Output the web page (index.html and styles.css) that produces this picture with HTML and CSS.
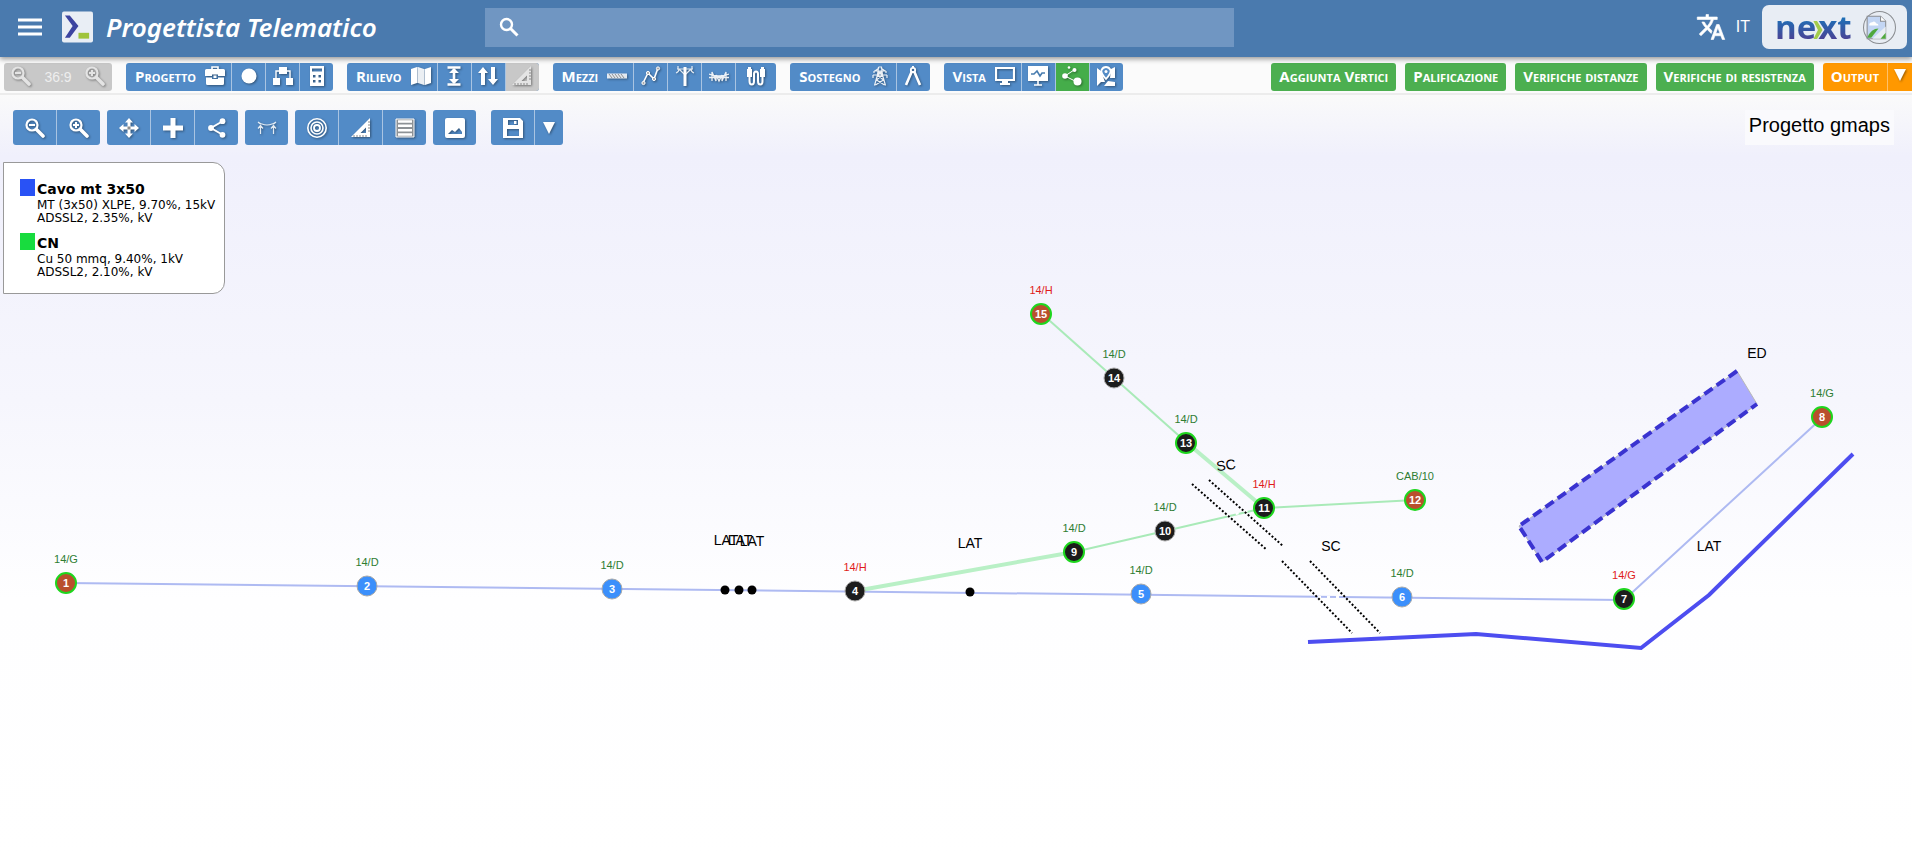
FILE: index.html
```html
<!DOCTYPE html>
<html lang="it">
<head>
  <meta charset="UTF-8" />
  <meta name="viewport" content="width=device-width, initial-scale=1.0"/>
  <title>Progettista Telematico</title>
  <link rel="stylesheet" href="styles.css">
</head>
<body>

  <!-- Icon set -->
  <svg class="sprite" aria-hidden="true">
    <symbol id="i-zoom-out" viewBox="0 0 20 20"><circle cx="7" cy="7" r="5.5" fill="none" stroke="currentColor" stroke-width="2.2"/><path d="M4 7h6" stroke="currentColor" stroke-width="2"/><path d="M11.5 11.5L18 18" stroke="currentColor" stroke-width="3.6" stroke-linecap="round"/></symbol>
    <symbol id="i-zoom-in" viewBox="0 0 20 20"><circle cx="7" cy="7" r="5.5" fill="none" stroke="currentColor" stroke-width="2.2"/><path d="M4 7h6M7 4v6" stroke="currentColor" stroke-width="2"/><path d="M11.5 11.5L18 18" stroke="currentColor" stroke-width="3.6" stroke-linecap="round"/></symbol>
    <symbol id="i-case" viewBox="0 0 20 20"><path d="M7 3V1h6v2" fill="none" stroke="currentColor" stroke-width="1.6"/><path d="M1.500 3h17q1.500 0 1.500 1.500V10h-7V8.500H7V10H0V4.500Q0 3 1.500 3zM1 11.500h6V13h6v-1.500h6V17.500q0 1.500-1.500 1.500h-15Q1 19 1 17.500z" fill="currentColor"/><path d="M8.500 9.500h3v2.500h-3z" fill="currentColor"/></symbol>
    <symbol id="i-dot" viewBox="0 0 20 20"><circle cx="10" cy="10" r="7.500" fill="currentColor"/></symbol>
    <symbol id="i-tree" viewBox="0 0 20 20"><path d="M6 1h8v7H6zM0 12h7v7H0zM13 12h7v7h-7z" fill="currentColor"/><path d="M7 5H3v7M13 5h4v7" fill="none" stroke="currentColor" stroke-width="1.400"/></symbol>
    <symbol id="i-calc" viewBox="0 0 20 20"><path d="M3 0h14v20H3zM5 2.500v3h10v-3zM6 9v2.500h2.500V9zM11.500 9v2.500H14V9zM6 14v2.500h2.500V14zM11.500 14v2.500H14V14z" fill="currentColor" fill-rule="evenodd"/></symbol>
    <symbol id="i-map" viewBox="0 0 20 20"><path d="M0 3l6-2v16l-6 2z" fill="currentColor"/><path d="M7 1l6 2v16l-6-2z" fill="currentColor" opacity=".9"/><path d="M14 3l6-2v16l-6 2z" fill="currentColor"/><path d="M6 1h1v16H6zM13 3h1v16h-1z" fill="currentColor" opacity=".6"/></symbol>
    <symbol id="i-height" viewBox="0 0 20 20"><path d="M3.500 1.500h13M3.500 18.500h13M10 3v14" stroke="currentColor" stroke-width="2.600"/><path d="M10 2l5 5H5zM10 18l5-5H5z" fill="currentColor"/></symbol>
    <symbol id="i-updown" viewBox="0 0 20 20"><path d="M5 1l5 6H7v12H3V7H0zM15 19l-5-6h3V1h4v12h3z" fill="currentColor"/></symbol>
    <symbol id="i-square" viewBox="0 0 20 20"><path d="M19 0v19H0zM15 9.500L9.500 15H15z" fill="currentColor" fill-rule="evenodd"/><path d="M3 19v-2M6 19v-2M9 19v-2M12 19v-2M15 19v-2M19 4h-2M19 7h-2M19 10h-2M19 13h-2" stroke="#888" stroke-width="1"/></symbol>
    <symbol id="i-cable" viewBox="0 0 20 20"><path d="M0 7.500h20v5H0z" fill="currentColor" opacity=".85"/><path d="M2 8l3 4M5 8l3 4M8 8l3 4M11 8l3 4M14 8l3 4" stroke="#777" stroke-width=".8"/></symbol>
    <symbol id="i-route" viewBox="0 0 20 20"><path d="M2 17L7 7l6 6 4-11" fill="none" stroke="currentColor" stroke-width="1.600"/><g fill="#aaa" stroke="currentColor"><circle cx="2.500" cy="17" r="1.600"/><circle cx="7" cy="7" r="1.600"/><circle cx="13" cy="13" r="1.600"/><circle cx="17" cy="2.500" r="1.600"/></g></symbol>
    <symbol id="i-pole" viewBox="0 0 20 20"><path d="M10 1v19" stroke="currentColor" stroke-width="3"/><path d="M2 3h16M4 3l6 6 6-6M1 7q3-1 3-4M19 7q-3-1-3-4M3 0v3M17 0v3" fill="none" stroke="currentColor" stroke-width="1.200" opacity=".85"/></symbol>
    <symbol id="i-span" viewBox="0 0 20 20"><path d="M0 8q10 4 20 0M0 11.500h20M3 15V6l4 9V9l3 6 3-6v6l4-9v9" fill="none" stroke="currentColor" stroke-width="1.300" opacity=".9"/></symbol>
    <symbol id="i-plug" viewBox="0 0 20 20"><path d="M3.500 6v9q0 3.500 2.300 3.500T8 15V8q0-2.500 2-2.500T12 8v7q0 3.500 2.300 3.500T16.500 15V6" fill="none" stroke="currentColor" stroke-width="2"/><path d="M2 1h3v2h1v8H1V3h1zM15 1h3v2h1v8h-5V3h1z" fill="currentColor"/></symbol>
    <symbol id="i-tower" viewBox="0 0 20 20"><path d="M8.500 1h3l1 8 3 10.500M8.500 1l-1 8-3 10.500M4 5h12M3 9h14M8 5l4.500 4-6 5 8 5M12 5L7.500 9l6 5-8 5M4 5v2M16 5v2M3 9v3M17 9v3M5 5l4-3M15 5l-4-3" fill="none" stroke="currentColor" stroke-width="1.200" opacity=".9"/></symbol>
    <symbol id="i-compass" viewBox="0 0 20 20"><path d="M9 5L3 19M11 5l6 14" stroke="currentColor" stroke-width="2.600"/><circle cx="10" cy="4" r="2.200" fill="none" stroke="currentColor" stroke-width="1.800"/><path d="M10 0v2" stroke="currentColor" stroke-width="2"/></symbol>
    <symbol id="i-screen" viewBox="0 0 20 20"><path d="M1 2h18v12H1z" fill="none" stroke="currentColor" stroke-width="2.200"/><path d="M7 15h6v2h2v2H5v-2h2z" fill="currentColor"/></symbol>
    <symbol id="i-board" viewBox="0 0 20 20"><path d="M0 0h20v15H0z" fill="currentColor"/><path d="M3 8h3l3-3 3 5 2-3h3" fill="none" stroke="#487caf" stroke-width="1.600"/><path d="M10 15v4M6 19h8" stroke="currentColor" stroke-width="1.600"/></symbol>
    <symbol id="i-nodes" viewBox="0 0 20 20"><path d="M3 10l9-6M3 10l12 6" stroke="currentColor" stroke-width="1"/><circle cx="3" cy="10" r="2.800" fill="currentColor"/><circle cx="15.500" cy="15.500" r="4" fill="currentColor"/><circle cx="12.500" cy="4" r="2" fill="currentColor"/><circle cx="7" cy="1.500" r="1.300" fill="currentColor"/></symbol>
    <symbol id="i-mappin" viewBox="0 0 20 20"><path d="M1 2l4 3 4 11-4 0-4 4zM15 3l4-2v11l-5 0zM12 15l7 1v4H8z" fill="currentColor"/><path d="M10 13Q4.500 7 5.500 4 7 1 10 1t4.500 3Q15.500 7 10 13z" fill="#548cc6" stroke="currentColor" stroke-width="1.800"/><circle cx="10" cy="5.500" r="1.500" fill="currentColor"/></symbol>
    <symbol id="i-move" viewBox="0 0 20 20"><path d="M10 0l4 4.500h-2.500v4h4V6L20 10l-4.500 4v-2.500h-4v4H14L10 20l-4-4.500h2.500v-4h-4V14L0 10l4.500-4v2.500h4v-4H6z" fill="currentColor"/><path d="M8.500 8.500h3v3h-3z" fill="#8d8d8d"/></symbol>
    <symbol id="i-plus" viewBox="0 0 20 20"><path d="M7.500 0h5v7.500H20v5h-7.500V20h-5v-7.500H0v-5h7.500z" fill="currentColor"/></symbol>
    <symbol id="i-share" viewBox="0 0 20 20"><path d="M16 3L4 10l12 7" fill="none" stroke="currentColor" stroke-width="2"/><circle cx="15.500" cy="3.200" r="2.900" fill="currentColor"/><circle cx="4" cy="10" r="2.900" fill="currentColor"/><circle cx="15.500" cy="16.800" r="2.900" fill="currentColor"/></symbol>
    <symbol id="i-sag" viewBox="0 0 20 20"><path d="M1 4q2 2 4 2 5 2 10 0 2 0 4-2M3.500 16V8M1 10.500l2.500-3 2.500 3M16.500 16V8M14 10.500l2.500-3 2.500 3" fill="none" stroke="currentColor" stroke-width="1.200" opacity=".85"/></symbol>
    <symbol id="i-target" viewBox="0 0 20 20"><g fill="none" stroke="currentColor"><circle cx="10" cy="10" r="9.200" stroke-width="1.600"/><circle cx="10" cy="10" r="6" stroke-width="1.600"/><circle cx="10" cy="10" r="3" stroke-width="1.800"/></g></symbol>
    <symbol id="i-list" viewBox="0 0 20 20"><path d="M1 1h18v18H1z" fill="#8d9296" stroke="currentColor"/><path d="M3 3.500h14M3 7.800h14M3 12.200h14M3 16.500h14" stroke="currentColor" stroke-width="2.400"/></symbol>
    <symbol id="i-image" viewBox="0 0 20 20"><path d="M2 0h16q2 0 2 2v16q0 2-2 2H2q-2 0-2-2V2Q0 0 2 0zM3 16h14v-2l-3-4-4 4-3-2z" fill="currentColor" fill-rule="evenodd"/></symbol>
    <symbol id="i-save" viewBox="0 0 20 20"><path d="M0 0h17l3 3v17H0zM5 2v5h10V2zM4 11v7h12v-7z" fill="currentColor" fill-rule="evenodd"/><path d="M11 3h2.500v3H11z" fill="currentColor"/></symbol>
    <symbol id="i-down" viewBox="0 0 20 20"><path d="M4 4h12l-6 12z" fill="currentColor"/></symbol>
  </svg>

  <header class="topbar">
    <div class="brand">
      <button class="menu-icon" aria-label="Menu"><svg viewBox="0 0 24 18"><path d="M0 2h24M0 9h24M0 16h24" stroke="currentColor" stroke-width="3"/></svg></button>
      <svg class="logo" viewBox="0 0 32 32"><rect width="32" height="32" rx="2" fill="#e9eef5"/><path d="M3 4h5l9 11-9 12H3l8-12z" fill="#3c44a0"/><path d="M17 22h11v6H17z" fill="#9fc43c"/></svg>
      <h1>Progettista Telematico</h1>
    </div>
    <label class="search">
      <svg viewBox="0 0 20 20"><circle cx="7.500" cy="7.500" r="5.500" fill="none" stroke="currentColor" stroke-width="2.400"/><path d="M11.500 11.500l7 7" stroke="currentColor" stroke-width="3"/></svg>
      <input type="search" aria-label="Cerca">
    </label>
    <div class="account">
      <button class="lang"><svg viewBox="0 0 24 24"><path fill="currentColor" stroke="currentColor" stroke-width=".5" d="M12.870 15.070l-2.540-2.510.03-.03A17.520 17.520 0 0 0 14.070 6H17V4h-7V2H8v2H1v2h11.170C11.500 7.920 10.440 9.750 9 11.350 8.070 10.320 7.300 9.190 6.690 8h-2c.73 1.630 1.730 3.170 2.980 4.560l-5.090 5.020L4 19l5-5 3.110 3.110.76-2.040zM18.500 10h-2L12 22h2l1.120-3h4.750L21 22h2l-4.500-12zm-2.620 7l1.620-4.330L19.120 17h-3.240z"/></svg>IT</button>
      <button class="profile" aria-label="Profilo">
        <span class="next">ne<svg viewBox="0 0 11 22"><path d="M1 1h4l6 10-6 10H1l5-10z" fill="#a3cb4b"/></svg>xt</span>
        <svg class="avatar" viewBox="0 0 32 32"><circle cx="16" cy="16" r="15.500" fill="none" stroke="#8a8d91"/><path d="M4 5h13l5 5v17H4z" fill="#c3d6f4" stroke="#8a8d91"/><path d="M17 5v5h5" fill="#fff" stroke="#8a8d91"/><path d="M6 14q0-3 3-3 2-2 4 1 2 0 2 2z" fill="#fff"/><path d="M4 26q4-9 11-9l-7 9z" fill="#4fa83d"/><path d="M9 27l13-12v12z" fill="#e8edf4"/><path d="M17 27l5-6v6z" fill="#4fa83d"/></svg>
      </button>
    </div>
  </header>

  <nav class="toolbar">
    <div class="group zoom disabled">
      <button disabled aria-label="Riduci"><svg><use href="#i-zoom-out"/></svg></button>
      <span>36:9</span>
      <button disabled aria-label="Ingrandisci"><svg><use href="#i-zoom-in"/></svg></button>
    </div>
    <div class="group">
      <button class="label">Progetto <svg><use href="#i-case"/></svg></button>
      <button aria-label="Punto"><svg><use href="#i-dot"/></svg></button>
      <button aria-label="Struttura"><svg><use href="#i-tree"/></svg></button>
      <button aria-label="Calcolo"><svg><use href="#i-calc"/></svg></button>
    </div>
    <div class="group">
      <button class="label">Rilievo <svg><use href="#i-map"/></svg></button>
      <button aria-label="Altezza"><svg><use href="#i-height"/></svg></button>
      <button aria-label="Inverti"><svg><use href="#i-updown"/></svg></button>
      <button class="disabled" disabled aria-label="Squadra"><svg><use href="#i-square"/></svg></button>
    </div>
    <div class="group">
      <button class="label">Mezzi <svg><use href="#i-cable"/></svg></button>
      <button aria-label="Tracciato"><svg><use href="#i-route"/></svg></button>
      <button aria-label="Palo"><svg><use href="#i-pole"/></svg></button>
      <button aria-label="Campata"><svg><use href="#i-span"/></svg></button>
      <button class="wide" aria-label="Cavi"><svg><use href="#i-plug"/></svg></button>
    </div>
    <div class="group">
      <button class="label">Sostegno <svg><use href="#i-tower"/></svg></button>
      <button aria-label="Compasso"><svg><use href="#i-compass"/></svg></button>
    </div>
    <div class="group">
      <button class="label">Vista <svg><use href="#i-screen"/></svg></button>
      <button aria-label="Profilo"><svg><use href="#i-board"/></svg></button>
      <button class="active" aria-label="Grafo"><svg><use href="#i-nodes"/></svg></button>
      <button aria-label="Mappa"><svg><use href="#i-mappin"/></svg></button>
    </div>
    <div class="steps">
      <button>Aggiunta Vertici</button>
      <button>Palificazione</button>
      <button>Verifiche distanze</button>
      <button>Verifiche di resistenza</button>
      <div class="output">
        <button>Output</button>
        <button class="arrow" aria-label="Altri output"><svg><use href="#i-down"/></svg></button>
      </div>
    </div>
  </nav>

  <main class="canvas">
    <svg class="plan" viewBox="0 96 1912 764">
      <!-- MT line -->
      <g class="line-mt">
        <path d="M66 584L1624 601L1822 419"/>
      </g>
      <!-- CN line -->
      <g class="line-cn">
        <path class="thick" d="M855 592L1074 553"/>
        <path d="M1074 553L1165 532L1264 509L1415 501"/>
        <path class="thick" d="M1264 509L1186 443"/>
        <path d="M1186 443L1041 314"/>
      </g>
      <path class="gap" d="M1227 517l21-5M1318 598h24"/>
      <g class="road">
        <path d="M1192 485l75 66M1209 481l74 66M1282 562l70 72M1310 562l70 72"/>
      </g>

      <path class="area" d="M1737 372L1519 527L1542 563L1757 405z"/>
      <path class="area-edge" d="M1737 372L1519 527L1542 563L1757 405"/>
      <path class="river" d="M1308 643L1476 635L1641 649L1709 596L1853 455"/>

      <g class="points">
        <circle cx="725" cy="591" r="4.500"/><circle cx="739" cy="591" r="4.500"/><circle cx="752" cy="591" r="4.500"/><circle cx="970" cy="593" r="4.500"/>
      </g>

      <g class="notes">
        <text x="726" y="546">LAT</text><text x="740" y="546">LAT</text><text x="752" y="547">LAT</text>
        <text x="970" y="549">LAT</text>
        <text x="1709" y="552">LAT</text>
        <text x="1757" y="359">ED</text>
        <text x="1331" y="552">SC</text>
        <text x="1226" y="471" transform="rotate(-8 1226 466)">SC</text>
      </g>

      <g class="node end"><circle cx="66" cy="584" r="10"/><text x="66" y="588">1</text><text class="tag" x="66" y="564">14/G</text></g>
      <g class="node mid"><circle cx="367" cy="587" r="10"/><text x="367" y="591">2</text><text class="tag" x="367" y="567">14/D</text></g>
      <g class="node mid"><circle cx="612" cy="590" r="10"/><text x="612" y="594">3</text><text class="tag" x="612" y="570">14/D</text></g>
      <g class="node"><circle cx="855" cy="592" r="10"/><text x="855" y="596">4</text><text class="tag bad" x="855" y="572">14/H</text></g>
      <g class="node mid"><circle cx="1141" cy="595" r="10"/><text x="1141" y="599">5</text><text class="tag" x="1141" y="575">14/D</text></g>
      <g class="node mid"><circle cx="1402" cy="598" r="10"/><text x="1402" y="602">6</text><text class="tag" x="1402" y="578">14/D</text></g>
      <g class="node joint"><circle cx="1624" cy="600" r="10"/><text x="1624" y="604">7</text><text class="tag bad" x="1624" y="580">14/G</text></g>
      <g class="node end"><circle cx="1822" cy="418" r="10"/><text x="1822" y="422">8</text><text class="tag" x="1822" y="398">14/G</text></g>
      <g class="node joint"><circle cx="1074" cy="553" r="10"/><text x="1074" y="557">9</text><text class="tag" x="1074" y="533">14/D</text></g>
      <g class="node"><circle cx="1165" cy="532" r="10"/><text x="1165" y="536">10</text><text class="tag" x="1165" y="512">14/D</text></g>
      <g class="node joint"><circle cx="1264" cy="509" r="10"/><text x="1264" y="513">11</text><text class="tag bad" x="1264" y="489">14/H</text></g>
      <g class="node end"><circle cx="1415" cy="501" r="10"/><text x="1415" y="505">12</text><text class="tag" x="1415" y="481">CAB/10</text></g>
      <g class="node joint"><circle cx="1186" cy="444" r="10"/><text x="1186" y="448">13</text><text class="tag" x="1186" y="424">14/D</text></g>
      <g class="node"><circle cx="1114" cy="379" r="10"/><text x="1114" y="383">14</text><text class="tag" x="1114" y="359">14/D</text></g>
      <g class="node end"><circle cx="1041" cy="315" r="10"/><text x="1041" y="319">15</text><text class="tag bad" x="1041" y="295">14/H</text></g>
    </svg>

    <div class="overlay">
      <div class="tools">
        <div class="group">
          <button aria-label="Zoom meno"><svg><use href="#i-zoom-out"/></svg></button>
          <button aria-label="Zoom più"><svg><use href="#i-zoom-in"/></svg></button>
        </div>
        <div class="group">
          <button aria-label="Sposta"><svg><use href="#i-move"/></svg></button>
          <button aria-label="Aggiungi"><svg><use href="#i-plus"/></svg></button>
          <button aria-label="Collega"><svg><use href="#i-share"/></svg></button>
        </div>
        <div class="group">
          <button aria-label="Franco"><svg><use href="#i-sag"/></svg></button>
        </div>
        <div class="group">
          <button aria-label="Centra"><svg><use href="#i-target"/></svg></button>
          <button aria-label="Misura"><svg><use href="#i-square"/></svg></button>
          <button aria-label="Elenco"><svg><use href="#i-list"/></svg></button>
        </div>
        <div class="group">
          <button aria-label="Immagine"><svg><use href="#i-image"/></svg></button>
        </div>
        <div class="group save">
          <button aria-label="Salva"><svg><use href="#i-save"/></svg></button>
          <button class="arrow" aria-label="Altri salvataggi"><svg><use href="#i-down"/></svg></button>
        </div>
        <h2>Progetto gmaps</h2>
      </div>

      <div class="legend">
        <div class="legend-item">
          <span class="swatch blue"></span>
          <div>
            <h3>Cavo mt 3x50</h3>
            <p>MT (3x50) XLPE, 9.70%, 15kV</p>
            <p>ADSSL2, 2.35%, kV</p>
          </div>
        </div>
        <div class="legend-item">
          <span class="swatch green"></span>
          <div>
            <h3>CN</h3>
            <p>Cu 50 mmq, 9.40%, 1kV</p>
            <p>ADSSL2, 2.10%, kV</p>
          </div>
        </div>
      </div>
    </div>
  </main>

</body>
</html>
```
FILE: styles.css
```css
:root {
  --bar: #4a7aae;
  --blue: #528bc7;
  --green: #4caf50;
  --orange: #ff9800;
  --gray: #c8c8c8;
}
* {
  box-sizing: border-box;
}
body {
  margin: 0;
  font-family: "Liberation Sans", Arial, sans-serif;
  background: #fff;
  overflow-x: hidden;
}
h1, h2, h3, p {
  margin: 0;
}
button {
  border: none;
  padding: 0;
  color: #fff;
  background: none;
  font-family: inherit;
  cursor: pointer;
}
.sprite {
  display: none;
}

/* header */
.topbar {
  position: relative;
  display: grid;
  grid-template-columns: 485px minmax(200px, 749px) 1fr;
  align-items: center;
  height: 57px;
  padding-bottom: 3px;
  background: var(--bar);
  color: #fff;
  box-shadow: 0 2px 5px rgba(0, 0, 0, 0.4);
  z-index: 2;
}
.brand {
  display: flex;
  align-items: center;
  padding-left: 18px;
}
.menu-icon svg {
  display: block;
  width: 24px;
  height: 18px;
}
.logo {
  width: 31px;
  height: 32px;
  margin: 0 13px 0 20px;
}
.brand h1 {
  font-family: "Noto Sans", sans-serif;
  font-size: 26px;
  font-style: italic;
  font-weight: 600;
  line-height: 36px;
  white-space: nowrap;
}
.search {
  display: flex;
  align-items: center;
  height: 39px;
  padding-left: 14px;
  background: #7096c2;
}
.search svg {
  width: 20px;
  height: 20px;
}
.search input {
  flex: 1;
  height: 100%;
  border: none;
  background: none;
  color: #fff;
  font-size: 16px;
  outline: none;
}
.account {
  display: flex;
  justify-content: flex-end;
  align-items: center;
  gap: 12px;
  padding-right: 5px;
}
.lang {
  display: flex;
  align-items: center;
  gap: 10px;
  font-size: 16px;
}
.lang svg {
  width: 30px;
  height: 34px;
}
.profile {
  display: flex;
  align-items: center;
  gap: 8px;
  width: 145px;
  height: 44px;
  padding: 0 11px 0 13px;
  border-radius: 7px;
  background: #e8edf4;
}
.next {
  display: flex;
  align-items: center;
  flex: 1;
  color: transparent;
  background: linear-gradient(#1f6eb5 30%, #4a4496 80%);
  -webkit-background-clip: text;
  background-clip: text;
  font-family: "Open Sans", sans-serif;
  font-size: 33px;
  font-weight: 700;
  line-height: 40px;
}
.next svg {
  flex: none;
  width: 11px;
  height: 20px;
  margin: 6px -5px 0 -4px;
}
.avatar {
  width: 33px;
  height: 33px;
}

/* toolbar */
.toolbar {
  display: flex;
  gap: 14px;
  height: 38px;
  padding: 6px 0 0 4px;
  background: #fbfbfb;
  border-bottom: 2px solid #ececec;
}
.group {
  display: flex;
  flex: none;
  height: 28px;
  border-radius: 3px;
  overflow: hidden;
  background: var(--blue);
}
.group button {
  display: flex;
  align-items: center;
  justify-content: center;
  width: 34px;
  height: 100%;
}
.toolbar .group button {
  padding-bottom: 2px;
}
.group button + button {
  border-left: 1px solid #a9c4e2;
}
.group svg,
.arrow svg {
  width: 20px;
  height: 20px;
  filter: drop-shadow(1px 1px 1px rgba(0, 0, 0, 0.4));
}
.group .label {
  width: auto;
  gap: 9px;
  padding: 0 6px 0 9px;
}
.label,
.steps button {
  font-family: "Open Sans", sans-serif;
  font-size: 15px;
  font-weight: 700;
  font-variant: small-caps;
  white-space: nowrap;
}
.group .wide {
  width: 41px;
}
.group .active {
  background: #45ad4a;
}
.group .disabled,
.group.disabled {
  background: var(--gray);
}
.group button:disabled {
  color: #e4e4e4;
}
.zoom {
  align-items: center;
  justify-content: space-between;
  width: 108px;
  color: #eee;
  font-size: 14px;
}
.steps {
  display: flex;
  gap: 9px;
  margin-left: auto;
}
.steps button {
  height: 28px;
  padding: 0 8px 2px;
  border-radius: 3px;
  background: var(--green);
}
.output {
  display: flex;
}
.steps .output button {
  border-radius: 3px 0 0 3px;
  background: var(--orange);
}
.steps .output .arrow {
  width: 25px;
  padding: 0 2px;
  border-left: 1px solid #ffc069;
  border-radius: 0;
}

/* drawing area */
.canvas {
  position: relative;
  background: linear-gradient(#fafafa, #f0f0fc 8%, #f6f6fd 40%, #fefeff 66%, #fff);
}
.plan {
  display: block;
  width: 100%;
}
.line-mt path,
.line-cn path {
  fill: none;
  stroke: #aebaf2;
  stroke-width: 2;
}
.line-cn path {
  stroke: #a9eab8;
}
.line-cn .thick {
  stroke: #b9f0c6;
  stroke-width: 4;
}
.gap {
  stroke: #fff;
  stroke-width: 2;
  stroke-dasharray: 3 6;
}
.road path {
  fill: none;
  stroke: #000;
  stroke-width: 2;
  stroke-dasharray: 2 2;
}
.area {
  fill: #acacff;
  stroke: #b8b8b8;
}
.area-edge {
  fill: none;
  stroke: #3a33d0;
  stroke-width: 4;
  stroke-dasharray: 10 5;
}
.river {
  fill: none;
  stroke: #4d4df0;
  stroke-width: 4;
}
.notes text {
  font-size: 14px;
  text-anchor: middle;
}
.node circle {
  fill: #1c1c1c;
  stroke: #aaa;
  stroke-width: 1;
}
.node.end circle {
  fill: #b94f2d;
  stroke: #1ed61e;
  stroke-width: 2;
}
.node.joint circle {
  stroke: #1ed61e;
  stroke-width: 2;
}
.node.mid circle {
  fill: #3b8ffb;
}
.node text {
  fill: #fff;
  font-size: 11px;
  font-weight: 700;
  text-anchor: middle;
}
.node .tag {
  fill: #2e7d32;
  font-weight: 400;
}
.node .bad {
  fill: #e01b1b;
}

/* controls over the drawing */
.overlay {
  position: absolute;
  top: 0;
  left: 0;
  right: 0;
  padding: 15px 18px 0 3px;
}
.tools {
  display: flex;
  gap: 7px;
  padding-left: 10px;
}
.tools .group {
  height: 35px;
}
.tools .group button {
  width: 43px;
}
.tools .group button + button {
  width: 44px;
}
.tools .save {
  margin-left: 8px;
}
.tools .group button.arrow {
  width: 29px;
}
.tools h2 {
  margin-left: auto;
  padding: 4px;
  background: #fafafd;
  font-size: 20px;
  font-weight: 400;
  line-height: 23px;
}
.legend {
  display: flex;
  flex-direction: column;
  gap: 8px;
  width: 222px;
  margin-top: 17px;
  padding: 16px 8px 14px 16px;
  border: 1px solid #999;
  border-radius: 0 12px 12px 0;
  background: #fff;
  font-family: "DejaVu Sans", Verdana, sans-serif;
}
.legend-item {
  display: flex;
  gap: 2px;
}
.swatch {
  width: 15px;
  height: 17px;
}
.blue {
  background: #2952f5;
}
.green {
  background: #18dc3e;
}
.legend h3 {
  font-size: 14px;
  line-height: 20px;
}
.legend p {
  font-size: 12px;
  line-height: 13px;
  white-space: nowrap;
}
```
